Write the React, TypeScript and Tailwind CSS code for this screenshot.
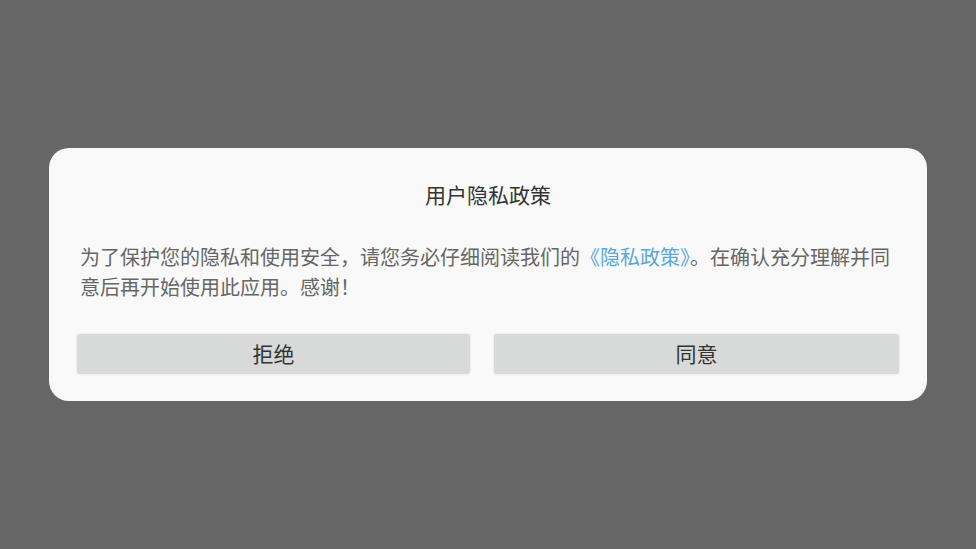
export default function App() {
  const font = { fontFamily: '"Noto Sans CJK SC", "Noto Sans", sans-serif' };
  return (
    <div className="w-[976px] h-[549px] bg-[#666666] flex items-center justify-center" style={font}>
      <div className="w-[878px] h-[253px] bg-[#f9f9f9] rounded-[20px] flex flex-col">
        <div className="pt-[32px] text-center text-[21px] leading-[28px] text-[#333333]">用户隐私政策</div>
        <div className="mt-[34px] pl-[31px] pr-[20px] text-[20px] leading-[30px] text-[#666666]">
          为了保护您的隐私和使用安全，请您务必仔细阅读我们的<span className="text-[#5aa7d9]">《隐私政策》</span>。在确认充分理解并同意后再开始使用此应用。感谢！
        </div>
        <div className="mt-[32px] px-[28px] flex gap-[24px]">
          <button className="w-[393px] h-[40px] bg-[#d8d9d9] rounded-[3px] shadow-[0_0_2px_rgba(0,0,0,0.15)] text-[21px] text-[#333333]">拒绝</button>
          <button className="w-[405px] h-[40px] bg-[#d8d9d9] rounded-[3px] shadow-[0_0_2px_rgba(0,0,0,0.15)] text-[21px] text-[#333333]">同意</button>
        </div>
      </div>
    </div>
  );
}
